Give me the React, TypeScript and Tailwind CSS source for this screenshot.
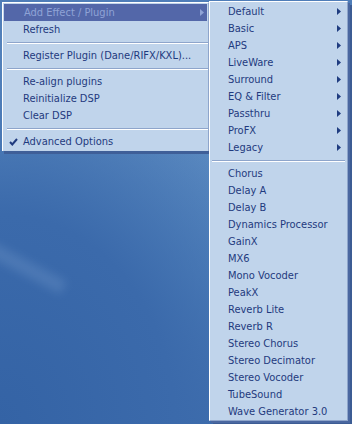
import React from 'react';

type Item = { label: string; sub?: boolean } | 'sep';

const mainItems: Item[] = [
  { label: 'Refresh' },
  'sep',
  { label: 'Register Plugin (Dane/RIFX/KXL)...' },
  'sep',
  { label: 'Re-align plugins' },
  { label: 'Reinitialize DSP' },
  { label: 'Clear DSP' },
  'sep',
];

const groups = ['Default', 'Basic', 'APS', 'LiveWare', 'Surround', 'EQ & Filter', 'Passthru', 'ProFX', 'Legacy'];
const plugins = [
  'Chorus',
  'Delay A',
  'Delay B',
  'Dynamics Processor',
  'GainX',
  'MX6',
  'Mono Vocoder',
  'PeakX',
  'Reverb Lite',
  'Reverb R',
  'Stereo Chorus',
  'Stereo Decimator',
  'Stereo Vocoder',
  'TubeSound',
  'Wave Generator 3.0',
];

const font = { fontFamily: '"DejaVu Sans Condensed", "DejaVu Sans", sans-serif' };

function Arrow({ light }: { light?: boolean }) {
  return (
    <svg width="4" height="7" viewBox="0 0 4 7" className="shrink-0">
      <path d="M0 0 L4 3.5 L0 7 Z" fill={light ? '#8fa3d6' : '#1f3c80'} />
    </svg>
  );
}

function Sep({ inset }: { inset: string }) {
  return (
    <div className={`h-[9px] flex flex-col justify-center ${inset}`}>
      <div className="h-px bg-[#8ea5cb]" />
      <div className="h-px bg-white" />
    </div>
  );
}

function Row({ label, sub }: { label: string; sub?: boolean }) {
  return (
    <div className="h-[17px] flex items-center pl-[18px] pr-[6px] text-[#1f3a7e]">
      <span className="flex-1 leading-none">{label}</span>
      {sub && <Arrow />}
    </div>
  );
}

export default function App() {
  return (
    <div
      className="relative w-[352px] h-[424px] overflow-hidden text-[11px] bg-[linear-gradient(180deg,#4f7db8_0%,#5a89c0_35%,#5283bd_65%,#416fae_100%)]"
      style={font}
    >
      {/* wallpaper swoosh */}
      <div className="absolute inset-0 bg-[radial-gradient(ellipse_at_0%_100%,#3463a5_0%,#3b6aab_35%,transparent_62%)]" />
      <div className="absolute left-[-40px] top-[255px] w-[110px] h-[14px] rotate-[28deg] bg-[#6a92c6] opacity-40 blur-[5px]" />

      {/* main menu */}
      <div className="absolute left-[2px] top-[2px] w-[207px] shadow-[2px_3px_0_#3f5f98]">
        <div className="bg-[#c0d4eb] border-t border-l border-white border-r border-r-[#8ea5cb] pb-[1px] pt-[1px]">
          <div className="h-[17px] mx-[1px] flex items-center pl-[20px] pr-[3px] bg-[#5367a9] text-[#8fa3d6]">
            <span className="flex-1 leading-none">Add Effect / Plugin</span>
            <Arrow light />
          </div>
          {mainItems.map((it, i) =>
            it === 'sep' ? (
              <Sep key={i} inset="ml-[4px] mr-0" />
            ) : (
              <div key={i} className="h-[17px] flex items-center pl-[20px] text-[#1f3a7e]">
                <span className="leading-none">{it.label}</span>
              </div>
            ),
          )}
          <div className="h-[17px] flex items-center text-[#1f3a7e]">
            <span className="w-[20px] flex justify-center">
              <svg width="9" height="8" viewBox="0 0 9 8">
                <path d="M1 4 L3.3 6.5 L8 1" stroke="#1f3a7e" strokeWidth="2" fill="none" />
              </svg>
            </span>
            <span className="leading-none">Advanced Options</span>
          </div>
        </div>
      </div>

      {/* submenu */}
      <div className="absolute left-[209px] top-[1px] w-[139px] shadow-[2px_2px_0_#4a67a0,4px_4px_0_#3c5c94]">
        <div className="bg-[#c0d4eb] border-t border-l border-white border-r border-r-[#8ea5cb] border-b border-b-[#8ea5cb] pt-[1px]">
          {groups.map((g) => (
            <Row key={g} label={g} sub />
          ))}
          <Sep inset="ml-[2px] mr-[2px]" />
          {plugins.map((p) => (
            <Row key={p} label={p} />
          ))}
        </div>
      </div>
    </div>
  );
}
